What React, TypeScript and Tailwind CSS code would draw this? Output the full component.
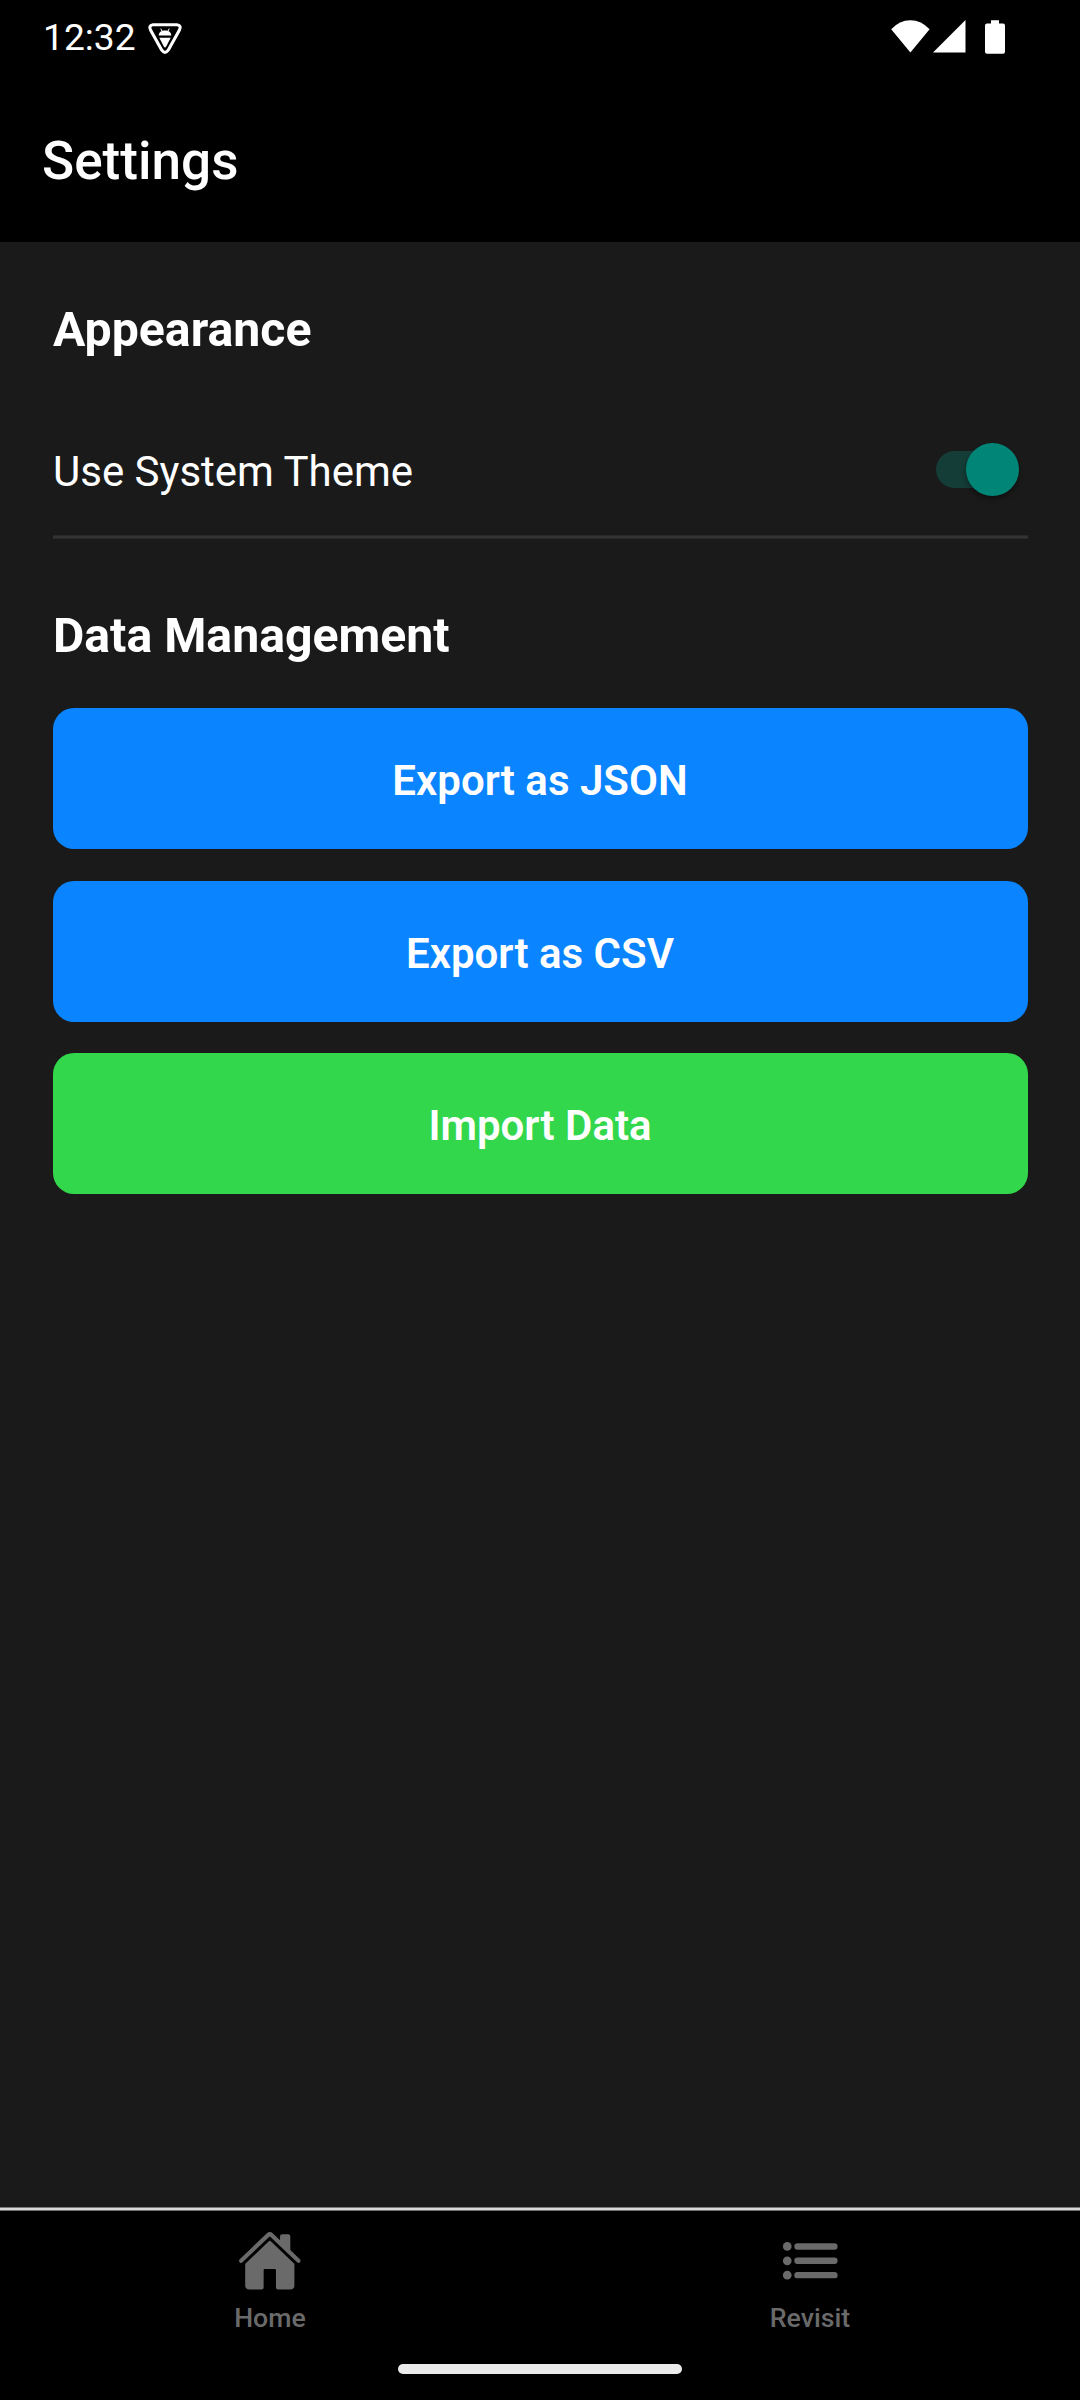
import React from "react";
import { IoHome } from "react-icons/io5";

function DebugIcon() {
  return (
    <svg width="36" height="34" viewBox="0 0 36 34" className="ml-[11px] mt-[22px] shrink-0">
      <path
        d="M6 2.8H30Q35 3.6 32.2 8.6L21.2 28.2Q18 32.6 14.8 28.2L3.8 8.6Q1 3.6 6 2.8Z"
        fill="none"
        stroke="#fff"
        strokeWidth="3.1"
        strokeLinejoin="round"
      />
      <path d="M11.7 13.4C12 10.4 14 8.6 18 8.6S24 10.4 24.3 13.4Z" fill="#fff" />
      <path d="M15 9.2L13.8 6.6M21 9.2L22.2 6.6" stroke="#fff" strokeWidth="1" />
      <path d="M12.3 15.8H23.7L19.2 24.6Q18 26.4 16.8 24.6Z" fill="#fff" />
    </svg>
  );
}

function StatusBar() {
  return (
    <div className="flex h-[74px] items-start justify-between pl-[43px] pr-[75px]">
      <div className="flex">
        <span className="mt-[15px] block text-[37.2px] leading-[44px]">12:32</span>
        <DebugIcon />
      </div>
      <div className="mt-5 flex items-start">
        <svg width="40" height="33" viewBox="0 0 40 33">
          <path d="M0.2 9.2Q8.5 0.2 19.4 0.2T38.6 9.2L19.4 32.6Z" fill="#fff" />
        </svg>
        <svg width="33" height="33" viewBox="0 0 33 33" className="ml-[2px]">
          <path d="M0 32.6L32.5 0V32.6Z" fill="#fff" />
        </svg>
        <svg width="20" height="34" viewBox="0 0 20 34" className="ml-[19px]">
          <path
            d="M6 0.3H14V3.5H18Q20 3.5 20 5.5V31.7Q20 33.7 18 33.7H2Q0 33.7 0 31.7V5.5Q0 3.5 2 3.5H6Z"
            fill="#fff"
          />
        </svg>
      </div>
    </div>
  );
}

function Switch() {
  return (
    <div className="relative mr-[9px] h-[53px] w-[83px]">
      <div className="absolute left-0 top-2 h-[37px] w-[74px] rounded-full bg-[#143d38]" />
      <div className="absolute right-0 top-0 size-[53px] rounded-full bg-[#008577] shadow-[0_3px_5px_rgba(0,0,0,0.4)]" />
    </div>
  );
}

function ActionButton({ label, color }: { label: string; color: string }) {
  return (
    <button
      className={`block h-[141px] w-full rounded-[21px] pb-[40px] pr-px pt-[45px] text-center text-[42px] font-semibold leading-[56px] ${color}`}
    >
      {label}
    </button>
  );
}

function ListIcon() {
  return (
    <svg width="65.6" height="65.6" viewBox="0 0 512 512">
      {[144, 256, 368].map((y) => (
        <g key={y}>
          <circle cx="80" cy={y} r="34" fill="currentColor" />
          <path d={`M160 ${y}H448`} stroke="currentColor" strokeWidth="50" strokeLinecap="round" />
        </g>
      ))}
    </svg>
  );
}

function Tab({ icon, label }: { icon: React.ReactNode; label: string }) {
  return (
    <div className="flex flex-1 flex-col items-center pt-[17px]">
      <div className="flex h-[66px] items-center">{icon}</div>
      <span className="mt-2 block text-[26.7px] font-medium leading-8">{label}</span>
    </div>
  );
}

export default function App() {
  return (
    <div className="flex h-[2400px] w-[1080px] flex-col bg-[#1a1a1a] font-['Roboto',sans-serif] text-white">
      <header className="h-[242px] bg-black">
        <StatusBar />
        <h1 className="pl-[42px] pt-[55px] text-[53.1px] font-medium leading-[64px]">Settings</h1>
      </header>

      <main className="flex-1 pl-[53px] pr-[52px] pt-[58px]">
        <h2 className="text-[48.2px] font-bold leading-[60px]">Appearance</h2>
        <div className="mt-[52px] flex h-[123px] items-start justify-between pt-[31px]">
          <span className="mt-px block text-[42px] leading-[56px]">Use System Theme</span>
          <Switch />
        </div>
        <div className="h-1 border-y border-[#282828] bg-[#333333]" />
        <h2 className="mt-[67px] text-[48.2px] font-bold leading-[60px]">Data Management</h2>
        <div className="mt-[42px] flex flex-col">
          <ActionButton label="Export as JSON" color="bg-[#0a84ff]" />
          <div className="h-8" />
          <ActionButton label="Export as CSV" color="bg-[#0a84ff]" />
          <div className="h-[31px]" />
          <ActionButton label="Import Data" color="bg-[#32d74b]" />
        </div>
      </main>

      <nav className="flex h-[193px] flex-col bg-black text-[#6a6a6a]">
        <div className="h-px bg-[#7b7b7b]" />
        <div className="h-0.5 bg-[#d8d8d8]" />
        <div className="h-px bg-[#6c6c6c]" />
        <div className="flex flex-1">
          <Tab icon={<IoHome size={65.6} />} label="Home" />
          <Tab icon={<ListIcon />} label="Revisit" />
        </div>
        <div className="mx-auto mb-[26px] h-2.5 w-[284px] rounded-full bg-[#ebebeb]" />
      </nav>
    </div>
  );
}
